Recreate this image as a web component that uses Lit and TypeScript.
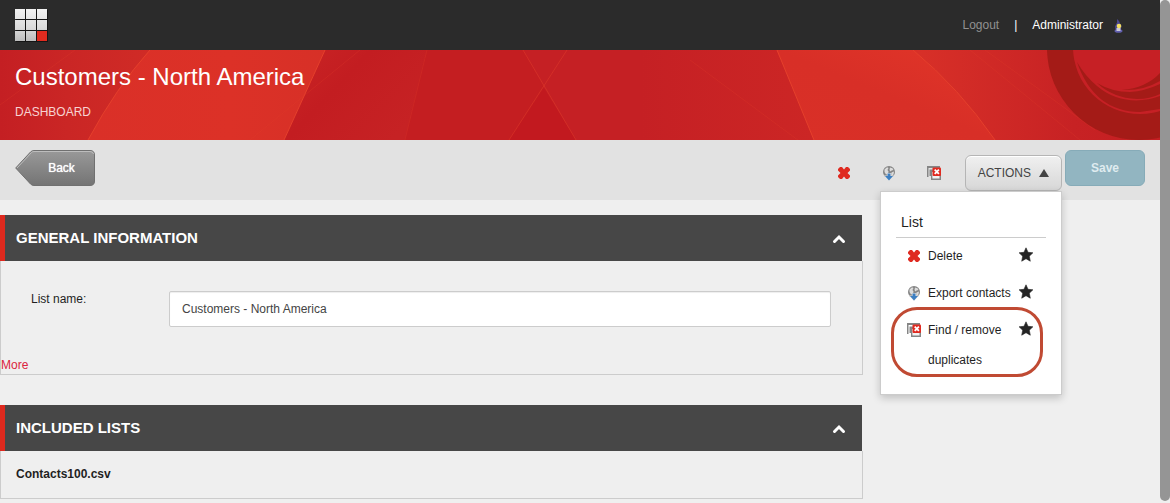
import { LitElement, html, css, svg } from "lit";
import { customElement, property } from "lit/decorators.js";

@customElement("action-icon")
class ActionIcon extends LitElement {
  @property() name = "";

  static styles = css`
    :host { display: block; flex: none; width: 14px; height: 16px; }
    svg { display: block; width: 14px; height: 16px; overflow: visible; }
  `;

  shape() {
    switch (this.name) {
      case "delete":
        return svg`<path fill="#df2a20" d="M1 4 3 2H5L7 4.500 9 2h2l2 2v1.500L10.500 8l2.500 2.500V12l-2 2H9L7 11.500 5 14H3l-2-2v-1.500L3.500 8 1 5.500z"/>`;
      case "export":
        return svg`
          <circle cx="7" cy="7" r="6" fill="#858585"/>
          <path fill="#dcdcdc" d="M2.500 4.500 5 2.300 6.500 3 5.500 5 6.500 6.500 6 9 4 9.500 2.500 7zM8 2.500l2.500.8 1 1.700-2 .5-1 1-1-1.500zM9.500 7.500l2.500-1-.5 3-2 1.500z"/>
          <path fill="#e2e2e2" d="M5 8h4.500v2.500H12L7 16l-5-5.500h3z"/>
          <path fill="#3d7fc1" d="M5.500 8.500h3V11H11l-4 4.500L3 11h2.500z"/>`;
      case "duplicates":
        return svg`
          <path fill="#858585" d="M0 1h13v2H1.500v9H0z"/>
          <path fill="#858585" d="M2.500 4.500H14V15H4v-4H2.500z"/>
          <path fill="#f2f2f2" d="M5 7h7.500v6.500H5.500z"/>
          <rect x="5.500" y="2.500" width="8.500" height="8.500" rx="1" fill="#e02a20"/>
          <path d="m7.700 4.700 4.200 4.200m0-4.200L7.700 8.900" stroke="#fff" stroke-width="1.800"/>`;
      default:
        return svg`<path fill="#242424" stroke="#242424" stroke-width=".6" stroke-linejoin="round" d="m7 .8 2 4.500 4.900.5-3.600 3.400 1 5L7 11.700l-4.300 2.500 1-5L.1 5.800 5 5.300z"/>`;
    }
  }

  render() {
    return html`<svg viewBox="0 0 14 16" aria-hidden="true">${this.shape()}</svg>`;
  }
}

@customElement("info-panel")
class InfoPanel extends LitElement {
  @property() heading = "";

  static styles = css`
    :host { display: block; }
    .head {
      display: flex; align-items: center; justify-content: space-between;
      height: 46px; box-sizing: border-box; margin-right: 1px;
      padding: 0 16px 0 11px; border-left: 5px solid #de291e;
      background: #474747; color: #fff;
    }
    h2 { margin: 0; font-size: 15px; line-height: 20px; font-weight: bold; text-transform: uppercase; }
    .toggle { border: 0; padding: 0; background: none; display: block; width: 14px; height: 14px; }
    .toggle svg { display: block; }
    .body { border: 1px solid #ccc; border-top: 0; }
  `;

  render() {
    return html`
      <section>
        <header class="head">
          <h2>${this.heading}</h2>
          <button class="toggle" aria-label="Collapse">
            <svg width="14" height="14" viewBox="0 0 14 14"><path d="M2.500 10.500 7 6l4.500 4.500" fill="none" stroke="#fff" stroke-width="3" stroke-linecap="round"/></svg>
          </button>
        </header>
        <div class="body"><slot></slot></div>
      </section>`;
  }
}

const actions = [
  { icon: "delete", label: "Delete", marked: false },
  { icon: "export", label: "Export contacts", marked: false },
  { icon: "duplicates", label: "Find / remove duplicates", marked: true },
];

@customElement("app-root")
class AppRoot extends LitElement {
  static styles = css`
    :host {
      display: grid; grid-template-columns: minmax(0, 1fr) 10px; min-height: 100vh;
      background: #efefef; color: #1f1f1f;
      font: 12px/16px "Liberation Sans", Arial, sans-serif;
    }
    button, input { font: inherit; box-sizing: border-box; }
    a { text-decoration: none; }
    .track { padding-bottom: 2px; display: flex; }
    .thumb { flex: 1; background: #959595; border-radius: 5px; }

    .topbar {
      display: flex; align-items: center; justify-content: space-between;
      height: 50px; box-sizing: border-box; padding: 0 35px 0 15px; background: #2b2b2b;
    }
    .logo { display: block; }
    .account { display: flex; align-items: center; gap: 15px; color: #fff; }
    .logout { color: #919191; }
    .user { display: flex; align-items: center; gap: 10px; }

    .banner { position: relative; height: 90px; background: #c52024; overflow: hidden; }
    .art { position: absolute; inset: 0; width: 100%; height: 100%; }
    .titles { position: relative; padding: 13px 15px; color: #fff; }
    h1 { margin: 0 0 13px; font-size: 24px; line-height: 28px; font-weight: normal; }
    .crumb { color: #f7d3d2; text-transform: uppercase; }

    .toolbar {
      display: flex; justify-content: space-between; align-items: flex-start;
      height: 60px; box-sizing: border-box; padding: 10px 15px; background: #e2e2e2;
    }
    .back {
      position: relative; width: 80px; height: 36px; padding: 0 0 0 13px;
      border: 0; background: none; color: #fff; text-shadow: 0 0 1px #fff;
    }
    .back svg { position: absolute; inset: 0; }
    .back span { position: relative; }
    .tools { display: flex; align-items: flex-start; }
    .quick { display: flex; gap: 31px; padding: 15px 24px 0 0; }
    .quick button { display: block; border: 0; padding: 0; background: none; }
    .menu-wrap { position: relative; padding-top: 5px; margin-right: 3px; }
    .actions {
      display: flex; align-items: center; gap: 8px; height: 36px; padding: 0 12px;
      border: 1px solid #b5b5b5; border-radius: 6px; color: #444;
      background: linear-gradient(#f0f0f0, #d7d7d7); box-shadow: inset 0 1px #fff;
    }
    .actions svg { display: block; }
    .save {
      width: 80px; height: 36px; border: 1px solid #86abb8; border-radius: 6px;
      background: #92b5c1; color: #dfebef; font-weight: bold;
    }

    .menu {
      position: absolute; z-index: 1; top: 100%; right: 0; width: 182px; box-sizing: border-box;
      padding: 15px 15px 12px; border: 1px solid #ccc; background: #fff;
      box-shadow: 0 3px 8px rgba(0, 0, 0, .2);
    }
    .menu h3 {
      margin: 0 0 3px; padding-left: 5px; border-bottom: 1px solid #ccc;
      font-size: 14px; line-height: 30px; font-weight: normal;
    }
    ul { list-style: none; margin: 0; padding: 0; }
    .item { position: relative; display: flex; align-items: flex-start; padding: 0 13px 7px 11px; }
    .item a { display: flex; flex: 1; gap: 7px; color: #1f1f1f; line-height: 30px; }
    .item a action-icon { margin-top: 7px; }
    .label { width: 91px; }
    .star { display: block; margin-top: 6px; padding: 0; border: 0; background: none; }
    .ring {
      position: absolute; inset: -8px 3px 5px -5px; border: 3px solid #c04a33;
      border-radius: 26px; pointer-events: none;
    }

    main { display: flex; flex-direction: column; gap: 30px; width: calc(75% - 7px); padding: 15px 0 4px; }
    .field { display: grid; grid-template-columns: 138px minmax(0, 1fr); padding: 30px 31px 29px 30px; }
    .field input {
      height: 36px; width: 100%; padding: 0 12px; border: 1px solid #ccc; border-radius: 2px;
      background: #fff; color: #444; box-shadow: inset 0 1px 1px rgba(0, 0, 0, .07);
    }
    .more { display: block; line-height: 18px; color: #db2340; }
    .file { padding: 15px 15px 16px; font-weight: bold; }
  `;

  logo() {
    const cells = [0, 1, 2, 3, 4, 5, 6, 7, 8];
    return html`<svg class="logo" width="33" height="33" viewBox="0 0 33 33" role="img" aria-label="Home">
      <defs><linearGradient id="steel" gradientUnits="userSpaceOnUse" x1="0" y1="0" x2="0" y2="32">
        <stop stop-color="#f2f2f2"/><stop offset=".6" stop-color="#dadada"/><stop offset="1" stop-color="#bdbdbd"/></linearGradient></defs>
      <path fill="#151515" d="M1 1h32v32H1z"/>
      ${cells.map((i) => svg`<rect x=${(i % 3) * 11} y=${Math.floor(i / 3) * 11} width="10" height="10" fill=${i === 8 ? "#e02b1f" : "url(#steel)"}/>`)}
    </svg>`;
  }

  art() {
    return html`<svg class="art" viewBox="0 0 1160 90" preserveAspectRatio="xMaxYMid slice" aria-hidden="true">
      <defs>
        <linearGradient id="left"><stop stop-color="#c41f23"/><stop offset=".45" stop-color="#ca2625"/><stop offset="1" stop-color="#d02b26"/></linearGradient>
        <linearGradient id="glow"><stop stop-color="#da3028"/><stop offset=".6" stop-color="#dc3127"/><stop offset="1" stop-color="#d73027"/></linearGradient>
        <linearGradient id="dusk" x1="0" y1="0" x2="1" y2=".6"><stop stop-color="#ca2525"/><stop offset=".45" stop-color="#c31d21"/><stop offset="1" stop-color="#c62224"/></linearGradient>
        <linearGradient id="mid"><stop stop-color="#c52024"/><stop offset="1" stop-color="#cc2625"/></linearGradient>
        <linearGradient id="flare" x1="0" y1="1" x2="1" y2="0"><stop stop-color="#d93027"/><stop offset=".5" stop-color="#d82f27"/><stop offset=".8" stop-color="#de3328"/><stop offset="1" stop-color="#db3128"/></linearGradient>
        <linearGradient id="right"><stop stop-color="#d83028"/><stop offset=".65" stop-color="#c72224"/><stop offset="1" stop-color="#c41e22"/></linearGradient>
      </defs>
      <path fill="url(#left)" d="M0 0h150L88 90H0z"/>
      <path fill="url(#glow)" d="M150 0h175l-41 90H88Q116 38 150 0z"/>
      <path fill="url(#dusk)" d="M325 0h102l-22 90H284z"/>
      <path fill="#c41e21" d="M427 0h96l21 38-35 52H405z"/>
      <path fill="#c2191f" d="m544 38 32 52h-67z"/>
      <path fill="url(#mid)" d="M640 0h137l37 90H640z"/>
      <path fill="url(#flare)" d="M777 0h136q46 38 82 90H814z"/>
      <path fill="url(#right)" d="M913 0h247v90H995Q959 38 913 0z"/>
      <g fill="none" stroke="#e5402c">
        <path d="M150 0Q116 38 88 90M325 0l-41 90M777 0l37 90M913 0q46 38 82 90"/>
        <path opacity=".45" d="m567 0-58 90M523 0l53 90"/>
        <path opacity=".25" d="m427 0-22 90M75 0 0 55M360 0 250 90M690 10l124 92M970 0l110 90M985 0l110 80"/>
      </g>
      <circle cx="1139" cy="-2" r="92" fill="#a41b17"/>
      <circle cx="1140" cy="-3" r="67" fill="#c62025"/>
      <g fill="#a41b17">
        <path d="M1077 12C1088 45 1110 62 1140 62L1160 59V46C1142 53 1116 53 1097 36Q1085 26 1077 12z"/>
        <path d="M1097 33Q1113 48 1137 49 1150 49 1160 44V34Q1145 41 1130 42 1112 42 1097 33z"/>
        <path d="M1122 40Q1146 38 1160 23V31Q1143 41 1122 40z"/>
      </g>
    </svg>`;
  }

  render() {
    return html`
      <div class="page">
        <header class="topbar">
          ${this.logo()}
          <div class="account">
            <a class="logout" href="#">Logout</a><span>|</span>
            <span class="user">Administrator
              <svg width="12" height="16" viewBox="0 0 12 16" aria-hidden="true">
                <path fill="#4a478e" d="m4 2 2 2 2.500 5.500-1 4h-5l-.5-4 2-4z"/><ellipse cx="5.500" cy="14" rx="4" ry="1.800" fill="#625fae"/>
                <path fill="#c9c8dc" d="M3.500 11h4v3h-4z"/><circle cx="6" cy="9" r="2.300" fill="#f3df62"/>
              </svg>
            </span>
          </div>
        </header>
        <div class="banner">
          ${this.art()}
          <div class="titles"><h1>Customers - North America</h1><div class="crumb">Dashboard</div></div>
        </div>
        <div class="toolbar">
          <button class="back">
            <svg width="80" height="36" viewBox="0 0 80 36" aria-hidden="true">
              <defs><linearGradient id="grey" x2="0" y2="1"><stop stop-color="#999"/><stop offset="1" stop-color="#747474"/></linearGradient></defs>
              <path d="M19 .5H75Q79.500.5 79.500 5V31Q79.500 35.500 75 35.500H19Q17 35.500 15.500 34L.7 18 15.500 2Q17 .5 19 .5z" fill="url(#grey)" stroke="#707070"/>
              <path d="M2 18 16.500 2.500Q17.500 1.500 19 1.500H75Q78 1.500 78.500 4" fill="none" stroke="#bdbdbd"/>
            </svg>
            <span>Back</span>
          </button>
          <div class="tools">
            <div class="quick">
              ${actions.map((a) => html`<button aria-label=${a.label}><action-icon name=${a.icon}></action-icon></button>`)}
            </div>
            <div class="menu-wrap">
              <button class="actions" aria-expanded="true">ACTIONS
                <svg width="10" height="10" viewBox="0 0 10 10" aria-hidden="true"><path fill="#444" d="m5 1 5 8H0z"/></svg>
              </button>
              <div class="menu">
                <h3>List</h3>
                <ul>
                  ${actions.map((a) => html`<li class="item">
                    <a href="#"><action-icon name=${a.icon}></action-icon><span class="label">${a.label}</span></a>
                    <button class="star" aria-label="Favorite"><action-icon name="star"></action-icon></button>
                    ${a.marked ? html`<span class="ring"></span>` : ""}
                  </li>`)}
                </ul>
              </div>
            </div>
            <button class="save">Save</button>
          </div>
        </div>
        <main>
          <info-panel heading="General information">
            <div class="field"><label for="list-name">List name:</label><input id="list-name" value="Customers - North America"></div>
            <a class="more" href="#">More</a>
          </info-panel>
          <info-panel heading="Included lists"><div class="file">Contacts100.csv</div></info-panel>
        </main>
      </div>
      <div class="track"><div class="thumb"></div></div>`;
  }
}
